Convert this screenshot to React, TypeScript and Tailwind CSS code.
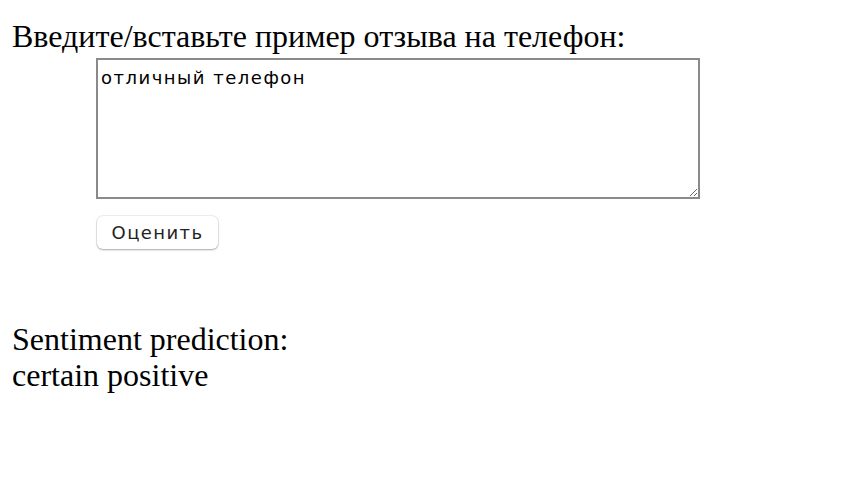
import { useState } from "react";

export default function App() {
  const [review, setReview] = useState("отличный телефон");

  return (
    <div className="min-h-[496px] bg-white px-3 pt-[18px] text-black font-['Liberation_Serif',serif]">
      <p className="text-[32px] leading-[36px]">Введите/вставьте пример отзыва на телефон:</p>
      <div className="ml-[84px] mt-[4px] flex flex-col items-start">
        <textarea
          value={review}
          onChange={(e) => setReview(e.target.value)}
          className="h-[141px] w-[604px] resize border-2 border-[#8a8a8a] bg-white px-[3px] pt-[7px] pb-[3px] text-[18px] leading-[21px] tracking-[1.5px] text-black font-['DejaVu_Sans',sans-serif] outline-none"
        />
        <button
          type="button"
          className="mt-[17px] ml-px h-[33px] w-[121px] rounded-[6px] bg-white text-[18px] tracking-[1.4px] text-[#222] shadow-[0_0_0_1px_rgba(0,0,0,0.06),0_1px_2px_rgba(0,0,0,0.3)] font-['DejaVu_Sans',sans-serif]"
        >
          Оценить
        </button>
      </div>
      <div className="mt-[72px] text-[32px] leading-[36px]">
        <p>Sentiment prediction:</p>
        <p>certain positive</p>
      </div>
    </div>
  );
}
